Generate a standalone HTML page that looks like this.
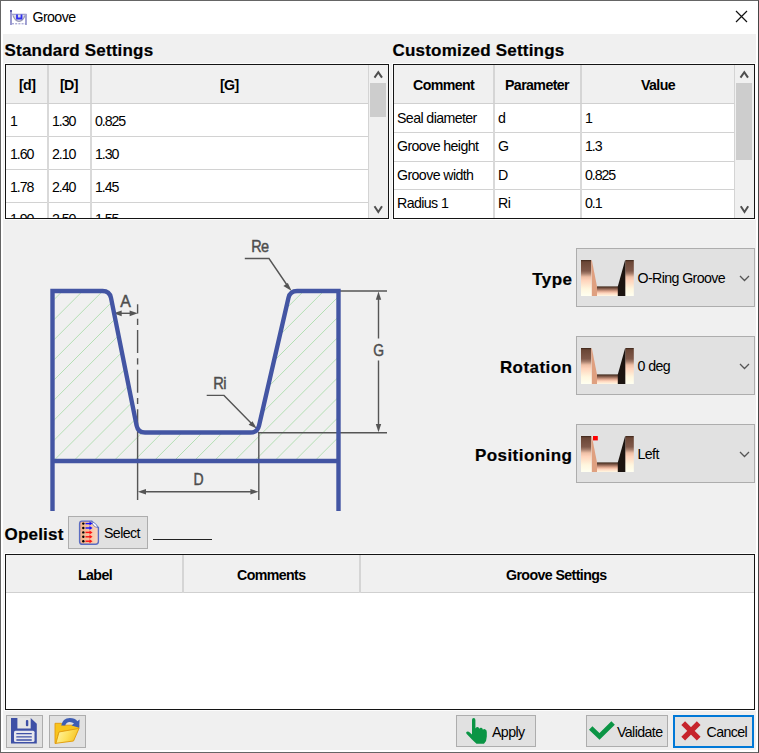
<!DOCTYPE html>
<html><head><meta charset="utf-8">
<style>
*{box-sizing:border-box;margin:0;padding:0}
html,body{width:759px;height:753px;overflow:hidden;background:#fff}
body{position:relative;font-family:"Liberation Sans",sans-serif;font-size:14.2px;letter-spacing:-0.6px;color:#000}
.a{position:absolute}
.win{left:0;top:0;width:759px;height:753px;border:1px solid #656565;border-right-color:#454545;background:#fff}
.body{left:3px;top:34px;width:753px;height:716px;background:#f0f0f0}
.h1{font-weight:bold;font-size:17px;line-height:17px;letter-spacing:0.2px;white-space:nowrap;-webkit-text-stroke:0.2px #000}
.rl{text-align:right;right:186.6px;letter-spacing:0.45px}
.tbl{border:1px solid #141414;background:#fff;box-shadow:0 0 0 1px #fcfcfc}
.hdr{background:#f0f0f0}
.hl{height:1px;background:#d2d2d2}
.vl{width:2px;background:#d9d9d9}
.hv{width:2px;background:#d5d5d5}
.t{white-space:nowrap;line-height:1}
.b{font-weight:bold}
.n{letter-spacing:-1.1px}
.sb{background:#f0f0f0}
.thumb{background:#cdcdcd}
.combo{background:#e1e1e1;border:1px solid #adadad}
.btn{background:#e1e1e1;border:1px solid #adadad}
</style></head><body>
<svg width="0" height="0" style="position:absolute">
  <defs>
    <linearGradient id="pg" x1="0" y1="0" x2="0" y2="1">
      <stop offset="0" stop-color="#3a2418"/>
      <stop offset="0.05" stop-color="#6a4636"/>
      <stop offset="0.3" stop-color="#80594a"/>
      <stop offset="0.37" stop-color="#a27a68"/>
      <stop offset="0.47" stop-color="#eebfa6"/>
      <stop offset="0.57" stop-color="#ffd4bc"/>
      <stop offset="0.8" stop-color="#fff6de"/>
      <stop offset="1" stop-color="#fffff0"/>
    </linearGradient>
    <linearGradient id="fg" x1="0" y1="0" x2="0" y2="1">
      <stop offset="0" stop-color="#3c2618"/>
      <stop offset="0.2" stop-color="#7a5444"/>
      <stop offset="0.5" stop-color="#dca48c"/>
      <stop offset="0.7" stop-color="#ffd4bc"/>
      <stop offset="1" stop-color="#fff8e4"/>
    </linearGradient>
    <g id="gicon">
      <rect x="0" y="0" width="10.2" height="36" fill="url(#pg)"/>
      <path d="M10.2 1 L10.8 0 L16 26.5 V36 H10.8 Z" fill="#dfa080"/>
      <path d="M10.2 8 L11 36 H10.2 Z" fill="#fff0e0"/>
      <rect x="16" y="26.4" width="21" height="9.6" fill="url(#fg)"/>
      <path d="M36.8 26.4 L44 0.5 H44.6 V36 H36.8 Z" fill="#1c1410"/>
      <rect x="44.5" y="0" width="8.3" height="36" fill="url(#pg)"/>
    </g>
  </defs>
</svg>
<div class="a win"></div>
<div class="a body"></div>

<!-- title -->
<svg class="a" style="left:9px;top:9px" width="20" height="18" viewBox="0 0 20 18">
  <rect x="1" y="1" width="2" height="15" fill="#9a9ad0"/>
  <rect x="1" y="1" width="2" height="2" fill="#5a5aa8"/>
  <path d="M3 5.5 H17.5" stroke="#a0a0d0" stroke-width="1.6"/>
  <rect x="16" y="5" width="2" height="11" fill="#a4a4d4"/>
  <path d="M4 6.5 Q6 12 10 12.5 Q14 12 16 6.5" fill="#d8d8e4" stroke="#9a9ab4" stroke-width="1.2"/>
  <path d="M8 5.5 V9.5 H12.5 V5.5" fill="none" stroke="#3030f0" stroke-width="1.8"/>
  <path d="M3 14.8 H17" stroke="#8c8cc8" stroke-width="1" stroke-dasharray="2 1.2"/>
</svg>
<div class="a t" style="left:32.5px;top:10px;font-size:14.2px;color:#000">Groove</div>
<svg class="a" style="left:735px;top:10px" width="13" height="13" viewBox="0 0 13 13">
  <path d="M1 1 L12 12 M12 1 L1 12" stroke="#111" stroke-width="1.2"/>
</svg>

<!-- section titles -->
<div class="a h1" style="left:4.5px;top:41.8px">Standard Settings</div>
<div class="a h1" style="left:392.5px;top:41.8px">Customized Settings</div>

<!-- left table -->
<div class="a tbl" style="left:5px;top:64px;width:384px;height:155px"></div>
<div class="a hdr" style="left:5.5px;top:64.5px;width:363px;height:38.5px"></div>
<div class="a" style="left:5.5px;top:103px;width:363px;height:1px;background:#d0d0d0"></div>
<div class="a hl" style="left:5.5px;top:136px;width:363px"></div>
<div class="a hl" style="left:5.5px;top:169px;width:363px"></div>
<div class="a hl" style="left:5.5px;top:202px;width:363px"></div>
<div class="a hv" style="left:47px;top:64.5px;height:38.5px"></div>
<div class="a hv" style="left:90px;top:64.5px;height:38.5px"></div>
<div class="a vl" style="left:47px;top:104px;height:114px"></div>
<div class="a vl" style="left:90px;top:104px;height:114px"></div>
<div class="a sb" style="left:368px;top:65px;width:20px;height:153px;border-left:1px solid #d4d4d4"></div>
<div class="a thumb" style="left:370px;top:83px;width:16px;height:34px"></div>
<svg class="a" style="left:373px;top:70px" width="11" height="9" viewBox="373 70 11 9"><path d="M374.5 77.6 L378.3 72.2 L382 77.6" fill="none" stroke="#4e4e4e" stroke-width="2"/></svg>
<svg class="a" style="left:373px;top:204px" width="11" height="10" viewBox="373 204 11 10"><path d="M374.5 206.3 L378.3 212 L382 206.3" fill="none" stroke="#4e4e4e" stroke-width="2"/></svg>
<div class="a t b" style="left:19px;top:77.7px">[d]</div>
<div class="a t b" style="left:60px;top:77.7px">[D]</div>
<div class="a t b" style="left:220px;top:77.7px">[G]</div>
<div class="a t n" style="left:10px;top:113.7px">1</div>
<div class="a t n" style="left:52px;top:113.7px">1.30</div>
<div class="a t n" style="left:95px;top:113.7px">0.825</div>
<div class="a t n" style="left:10px;top:146.7px">1.60</div>
<div class="a t n" style="left:52px;top:146.7px">2.10</div>
<div class="a t n" style="left:95px;top:146.7px">1.30</div>
<div class="a t n" style="left:10px;top:179.7px">1.78</div>
<div class="a t n" style="left:52px;top:179.7px">2.40</div>
<div class="a t n" style="left:95px;top:179.7px">1.45</div>
<div class="a" style="left:6px;top:203px;width:362px;height:15px;overflow:hidden">
  <div class="a t n" style="left:4px;top:8.9px">1.90</div>
  <div class="a t n" style="left:46px;top:8.9px">2.50</div>
  <div class="a t n" style="left:89px;top:8.9px">1.55</div>
</div>

<!-- right table -->
<div class="a tbl" style="left:393px;top:64px;width:362px;height:155px"></div>
<div class="a hdr" style="left:393.5px;top:64.5px;width:341px;height:38.5px"></div>
<div class="a" style="left:393.5px;top:103px;width:341px;height:1px;background:#d0d0d0"></div>
<div class="a hl" style="left:393.5px;top:132px;width:341px"></div>
<div class="a hl" style="left:393.5px;top:160.5px;width:341px"></div>
<div class="a hl" style="left:393.5px;top:189px;width:341px"></div>
<div class="a hv" style="left:493px;top:65px;height:38px"></div>
<div class="a hv" style="left:580px;top:65px;height:38px"></div>
<div class="a vl" style="left:493px;top:104px;height:114px"></div>
<div class="a vl" style="left:580px;top:104px;height:114px"></div>
<div class="a sb" style="left:734px;top:65px;width:20px;height:153px;border-left:1px solid #d4d4d4"></div>
<div class="a thumb" style="left:736px;top:83px;width:16px;height:77px"></div>
<svg class="a" style="left:739px;top:70px" width="11" height="9" viewBox="739 70 11 9"><path d="M740.5 77.6 L744.3 72.2 L748 77.6" fill="none" stroke="#4e4e4e" stroke-width="2"/></svg>
<svg class="a" style="left:739px;top:204px" width="11" height="10" viewBox="739 204 11 10"><path d="M740.8 206.3 L744.5 212 L748.2 206.3" fill="none" stroke="#4e4e4e" stroke-width="2"/></svg>
<div class="a t b" style="left:413px;top:77.7px">Comment</div>
<div class="a t b" style="left:505px;top:77.7px">Parameter</div>
<div class="a t b" style="left:641px;top:77.7px">Value</div>
<div class="a t" style="left:397px;top:110.7px">Seal diameter</div>
<div class="a t" style="left:498px;top:110.7px">d</div>
<div class="a t n" style="left:585px;top:110.7px">1</div>
<div class="a t" style="left:397px;top:139.2px">Groove height</div>
<div class="a t" style="left:498px;top:139.2px">G</div>
<div class="a t n" style="left:585px;top:139.2px">1.3</div>
<div class="a t" style="left:397px;top:167.7px">Groove width</div>
<div class="a t" style="left:498px;top:167.7px">D</div>
<div class="a t n" style="left:585px;top:167.7px">0.825</div>
<div class="a t" style="left:397px;top:196.2px">Radius 1</div>
<div class="a t" style="left:498px;top:196.2px">Ri</div>
<div class="a t n" style="left:585px;top:196.2px">0.1</div>

<!-- DIAGRAM -->
<svg class="a" style="left:0;top:220px" width="400" height="300" viewBox="0 220 400 300">
  <defs>
    <clipPath id="hc"><path d="M52.5 291 H109.6 L138 432.5 H257.4 L290.1 291 H338.5 V461 H52.5 Z"/></clipPath>
  </defs>
  <path clip-path="url(#hc)" d="M-127.5 461L42.5 291M-107.4 461L62.6 291M-87.3 461L82.7 291M-67.2 461L102.8 291M-47.1 461L122.9 291M-27.0 461L143.0 291M-6.9 461L163.1 291M13.2 461L183.2 291M33.3 461L203.3 291M53.4 461L223.4 291M73.5 461L243.5 291M93.6 461L263.6 291M113.7 461L283.7 291M133.8 461L303.8 291M153.9 461L323.9 291M174.0 461L344.0 291M194.1 461L364.1 291M214.2 461L384.2 291M234.3 461L404.3 291M254.4 461L424.4 291M274.5 461L444.5 291M294.6 461L464.6 291M314.7 461L484.7 291M334.8 461L504.8 291M354.9 461L524.9 291" stroke="#b4deb4" stroke-width="1" fill="none"/>
  <g stroke="#555" stroke-width="1.4" fill="none">
    <path d="M137.6 304.3 V432" stroke-dasharray="23 5.2 6.2 5.2" stroke-dashoffset="13.8"/>
    <path d="M137.6 432 V500 M258.8 432 V500"/>
    <path d="M118 313.3 H132"/>
    <path d="M144 491.7 H252"/>
    <path d="M339 291 H387 M258 432.7 H387"/>
    <path d="M378.5 297 V338.6 M378.5 360.5 V426"/>
    <path d="M244.8 258.5 H269 L287 285"/>
    <path d="M206.7 395.4 H224 L251.5 423.5"/>
  </g>
  <g fill="#555">
    <path d="M113.5 313.3 L121.7 310.4 L121.7 316.2 Z"/>
    <path d="M137.8 313.3 L129.6 310.4 L129.6 316.2 Z"/>
    <path d="M137.8 491.7 L146 489 L146 494.4 Z"/>
    <path d="M258.6 491.7 L250.4 489 L250.4 494.4 Z"/>
    <path d="M378.5 291.5 L375.8 299.7 L381.2 299.7 Z"/>
    <path d="M378.5 432.3 L375.8 424.1 L381.2 424.1 Z"/>
    <path d="M291.7 291 L283.4 286.1 L287.8 283 Z"/>
    <path d="M256.8 428.7 L248.6 424.8 L252.5 421.2 Z"/>
  </g>
  <g fill="#4d4d4d" stroke="#4d4d4d" stroke-width="0.45" font-family="Liberation Sans, sans-serif" font-size="16.2px">
    <text x="120.3" y="307.2" textLength="10" lengthAdjust="spacingAndGlyphs">A</text>
    <text x="251.2" y="252.2" textLength="17.4" lengthAdjust="spacingAndGlyphs">Re</text>
    <text x="213.2" y="389" textLength="12.8" lengthAdjust="spacingAndGlyphs">Ri</text>
    <text x="373.3" y="355.6" textLength="10.3" lengthAdjust="spacingAndGlyphs">G</text>
    <text x="193.6" y="485" textLength="9.6" lengthAdjust="spacingAndGlyphs">D</text>
  </g>
  <g stroke="#4355a3" stroke-width="4.4" fill="none" stroke-linejoin="miter" stroke-linecap="butt">
    <path d="M52.5 511 V291 H102.6 Q109.6 291 111 297.9 L136.6 425.6 Q138 432.5 145 432.5 H250.4 Q257.4 432.5 259 425.7 L288.5 297.8 Q290.1 291 297.1 291 H338.5 V511"/>
    <path d="M52.5 461 H338.5"/>
  </g>
</svg>

<!-- combos -->
<div class="a h1 rl" style="top:271.2px">Type</div>
<div class="a combo" style="left:576px;top:248px;width:179px;height:59px"></div>
<div class="a t" style="left:637.5px;top:270.7px">O-Ring Groove</div>
<svg class="a" style="left:581px;top:260px" width="53" height="36" viewBox="0 0 53 36"><use href="#gicon"/></svg>
<svg class="a" style="left:739px;top:275px" width="11" height="7" viewBox="0 0 11 7"><path d="M1 1 L5.5 5.5 L10 1" fill="none" stroke="#555" stroke-width="1.3"/></svg>

<div class="a h1 rl" style="top:359.2px">Rotation</div>
<div class="a combo" style="left:576px;top:336px;width:179px;height:59px"></div>
<div class="a t" style="left:637.5px;top:358.7px">0 deg</div>
<svg class="a" style="left:581px;top:348px" width="53" height="36" viewBox="0 0 53 36"><use href="#gicon"/></svg>
<svg class="a" style="left:739px;top:363px" width="11" height="7" viewBox="0 0 11 7"><path d="M1 1 L5.5 5.5 L10 1" fill="none" stroke="#555" stroke-width="1.3"/></svg>

<div class="a h1 rl" style="top:446.8px">Positioning</div>
<div class="a combo" style="left:576px;top:424px;width:179px;height:59px"></div>
<div class="a t" style="left:637.5px;top:446.7px">Left</div>
<svg class="a" style="left:581px;top:436px" width="53" height="36" viewBox="0 0 53 36"><use href="#gicon"/><rect x="12" y="0" width="4.8" height="4.4" fill="#ff0000"/></svg>
<svg class="a" style="left:739px;top:451px" width="11" height="7" viewBox="0 0 11 7"><path d="M1 1 L5.5 5.5 L10 1" fill="none" stroke="#555" stroke-width="1.3"/></svg>


<!-- opelist -->
<div class="a h1" style="left:4.5px;top:525.8px">Opelist</div>
<div class="a btn" style="left:68px;top:516px;width:80px;height:32.5px"></div>
<svg class="a" style="left:78px;top:519px" width="22" height="27" viewBox="0 0 22 27">
  <defs><linearGradient id="sg" x1="0" y1="0" x2="1" y2="0"><stop offset="0" stop-color="#f2b088"/><stop offset="0.55" stop-color="#f6c4a2"/><stop offset="1" stop-color="#f9d6c2"/></linearGradient></defs>
  <path d="M3.9 2.1 H13.8 L20.4 8.6 V22.6 Q20.4 25.3 17.6 25.3 H4.4 Q1.6 25.3 1.6 22.6 V4.8 Q1.6 2.1 3.9 2.1 Z" fill="url(#sg)" stroke="#5b6dc2" stroke-width="1.4"/>
  <path d="M13.9 2.6 Q14.6 8 20 8.5 Q18.5 4.2 13.9 2.6 Z" fill="#fff" stroke="#5b6dc2" stroke-width="0.8"/>
  <g fill="#000"><circle cx="5.3" cy="4.6" r="1.2"/><circle cx="5.3" cy="9" r="1.2"/><circle cx="5.3" cy="13.4" r="1.2"/><circle cx="5.3" cy="17.8" r="1.2"/><circle cx="5.3" cy="22.2" r="1.2"/></g>
  <g stroke-width="1.4"><path d="M7.5 4.6 H12" stroke="#1010ff"/><path d="M7.5 9 H12" stroke="#1010ff"/><path d="M7.5 13.4 H12" stroke="#ff1010"/><path d="M7.5 17.8 H12" stroke="#ff1010"/><path d="M7.5 22.2 H12" stroke="#ff1010"/></g>
  <g><path d="M11.5 2.6 L14.5 4.6 L11.5 6.6 Z" fill="#1010ff"/><path d="M11.5 7 L14.5 9 L11.5 11 Z" fill="#1010ff"/><path d="M11.5 11.4 L14.5 13.4 L11.5 15.4 Z" fill="#ff1010"/><path d="M11.5 15.8 L14.5 17.8 L11.5 19.8 Z" fill="#ff1010"/><path d="M11.5 20.2 L14.5 22.2 L11.5 24.2 Z" fill="#ff1010"/></g>
</svg>
<div class="a t" style="left:104px;top:525.7px">Select</div>
<div class="a" style="left:153px;top:539px;width:59px;height:1px;background:#222"></div>

<!-- lower table -->
<div class="a tbl" style="left:5px;top:554px;width:750px;height:156px"></div>
<div class="a hdr" style="left:5.5px;top:554.5px;width:748px;height:38px"></div>
<div class="a" style="left:5.5px;top:592px;width:748px;height:1px;background:#d0d0d0"></div>
<div class="a hv" style="left:181.5px;top:554.5px;height:38px"></div>
<div class="a hv" style="left:358.5px;top:554.5px;height:38px"></div>
<div class="a t b" style="left:78px;top:567.7px">Label</div>
<div class="a t b" style="left:237px;top:567.7px">Comments</div>
<div class="a t b" style="left:506px;top:567.7px">Groove Settings</div>

<!-- bottom buttons -->
<div class="a btn" style="left:5.5px;top:714.5px;width:37.5px;height:33px"></div>
<div class="a btn" style="left:48.5px;top:714.5px;width:37.5px;height:33px"></div>
<svg class="a" style="left:10px;top:717px" width="28" height="28" viewBox="0 0 28 28">
  <path d="M1 1 H20.7 L26.8 6.7 V26.6 H1 Z" fill="#3e50a6"/>
  <rect x="7.4" y="1" width="13.3" height="10.5" fill="#e6e6e6"/>
  <rect x="15.9" y="3" width="2.4" height="6.3" rx="1" fill="#3e50a6"/>
  <rect x="4" y="13.8" width="20.5" height="11.2" rx="1.5" fill="#e6e6ee"/>
  <g fill="#3e50a6"><rect x="6.2" y="15.9" width="15.7" height="1.4" rx="0.6"/><rect x="6.2" y="19.2" width="15.7" height="1.4" rx="0.6"/><rect x="6.2" y="22.3" width="15.7" height="1.4" rx="0.6"/></g>
</svg>
<svg class="a" style="left:50px;top:714px" width="34" height="34" viewBox="50 714 34 34">
  <defs><linearGradient id="fy" x1="0" y1="0" x2="1" y2="0.3"><stop offset="0" stop-color="#fff6b0"/><stop offset="0.6" stop-color="#fde05a"/><stop offset="1" stop-color="#f6c52a"/></linearGradient></defs>
  <path d="M55 723.3 H61.5 L63 725.2 H78.8 V729 L59 732 L56 743.5 H55 Z" fill="#f8c41c" stroke="#e39a0e" stroke-width="0.9"/>
  <path d="M61.2 725.6 Q62.5 718.3 69.8 718 Q75 718 77.4 721.3 L79.6 719.4 L79.2 727.8 L71.6 725.4 L74 723.6 Q72.2 721.9 69.6 722 Q66.2 722.2 65.2 725.6 Z" fill="#3f5db4"/>
  <path d="M55.9 743.3 L59 732 L79 728.4 L73.5 741 Z" fill="url(#fy)" stroke="#e3a010" stroke-width="1"/>
</svg>
<div class="a btn" style="left:456px;top:714.5px;width:80px;height:32.5px"></div>
<svg class="a" style="left:465px;top:717px" width="24" height="28" viewBox="0 0 24 28">
  <path d="M7 3 Q7 1 8.7 1 Q10.4 1 10.4 3 V11.5 Q11 9.8 12.5 10 Q14 10.2 14.2 11.8 Q15 10.5 16.4 10.8 Q17.8 11.2 17.9 12.8 Q18.8 11.8 20 12.2 Q21.8 12.8 21.8 15 V19.5 Q21.8 24 19 26.8 H11.5 Q9 24.5 6.5 22 L1.5 16.8 Q0.6 15.5 1.8 14.8 Q3.2 14 4.5 15.2 L7 17.5 Z" fill="#0b9545"/>
</svg>
<div class="a t" style="left:492px;top:724.7px">Apply</div>
<div class="a btn" style="left:585.5px;top:714.5px;width:82px;height:32.5px"></div>
<svg class="a" style="left:588px;top:720px" width="28" height="22" viewBox="0 0 28 22">
  <path d="M2.7 7.9 L11.5 16.4 L25.1 3" fill="none" stroke="#0b9545" stroke-width="4.9" stroke-linecap="butt"/>
</svg>
<div class="a t" style="left:617px;top:724.7px">Validate</div>
<div class="a btn" style="left:673px;top:714.5px;width:81px;height:33px;border:2px solid #0078d7"></div>
<svg class="a" style="left:680px;top:720px" width="22" height="22" viewBox="0 0 22 22">
  <path d="M3.2 3.2 L18.7 18.7 M18.7 3.2 L3.2 18.7" fill="none" stroke="#c6242c" stroke-width="5.3"/>
</svg>
<div class="a t" style="left:706.5px;top:724.7px">Cancel</div>

</body></html>
